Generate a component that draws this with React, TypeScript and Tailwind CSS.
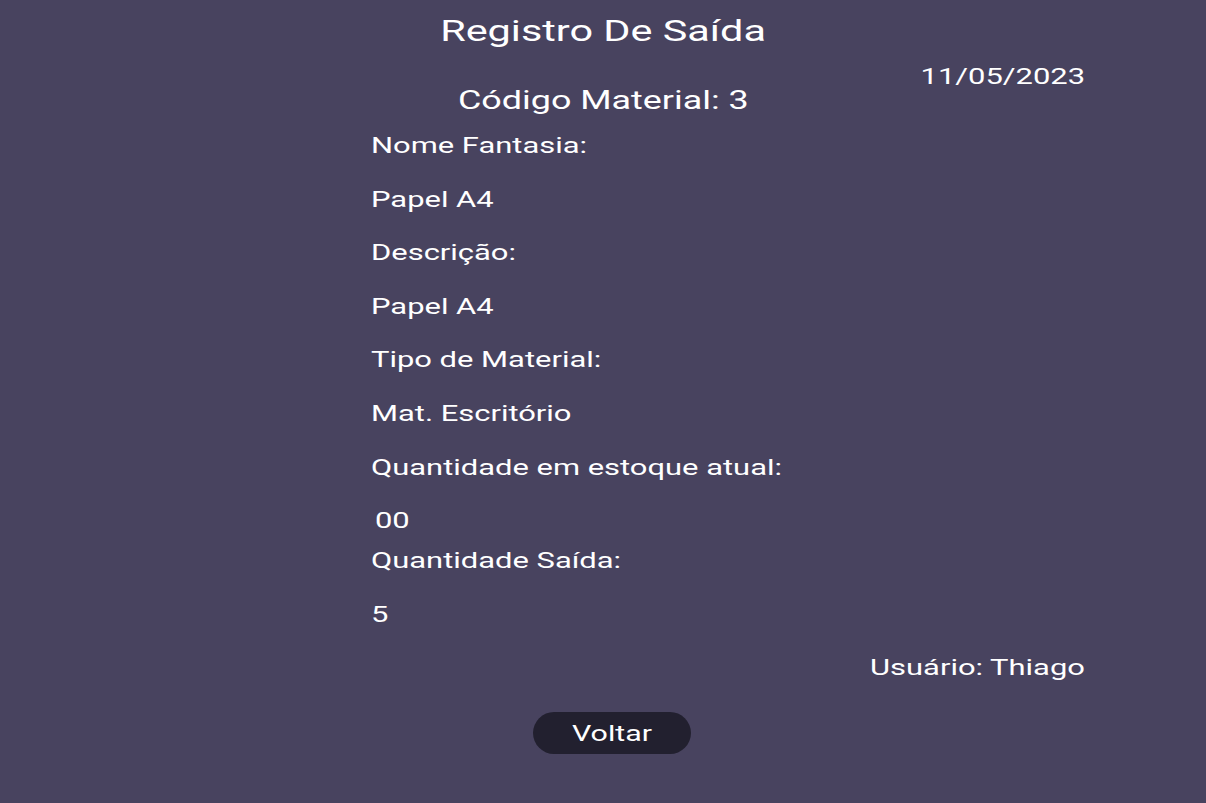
// the reference is a phone screenshot stretched sideways, so text spans get scale-x
const stretch = 'inline-block scale-x-[1.38]';
const stretchBody = 'inline-block scale-x-[1.405]';

export default function App() {
  const rows: { text: string; cls?: string }[] = [
    { text: 'Nome Fantasia:' },
    { text: 'Papel A4' },
    { text: 'Descrição:' },
    { text: 'Papel A4' },
    { text: 'Tipo de Material:' },
    { text: 'Mat. Escritório' },
    { text: 'Quantidade em estoque atual:' },
    { text: '00', cls: 'pl-[4px] -mb-[13.6px]' },
    { text: 'Quantidade Saída:' },
    { text: '5' },
  ];

  return (
    <div className="min-h-screen bg-[#48435f] text-white font-['Roboto',sans-serif]">
      <h1 className="pt-[13px] text-center text-[30px] leading-[36px]">
        <span className={`${stretch} origin-center`}>Registro De Saída</span>
      </h1>

      <div className="mt-[14px] grid grid-cols-[1fr_auto_1fr]">
        <div />
        <div className="mt-[21px] text-center text-[26px] leading-[32px]">
          <span className={`${stretch} origin-center`}>Código Material: 3</span>
        </div>
        <div className="justify-self-end pr-[121px] text-[22px] leading-[28px]">
          <span className={`${stretchBody} origin-right`}>11/05/2023</span>
        </div>
      </div>

      <div className="mt-[16px] flex flex-col gap-[25.6px] pl-[371px] pr-[121px] text-[22px] leading-[28px]">
        {rows.map((r, i) => (
          <div key={i} className={r.cls}>
            <span className={`${stretchBody} origin-left`}>{r.text}</span>
          </div>
        ))}
        <div className="text-right">
          <span className={`${stretchBody} origin-right`}>Usuário: Thiago</span>
        </div>
      </div>

      <div className="mt-[30px] flex justify-center pl-[18px]">
        <button className="h-[42px] w-[158px] rounded-full bg-[#22202f] text-[22px]">
          <span className={`${stretch} origin-center`}>Voltar</span>
        </button>
      </div>
    </div>
  );
}
